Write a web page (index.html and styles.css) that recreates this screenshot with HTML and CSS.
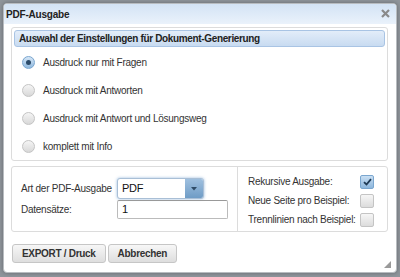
FILE: index.html
```html
<!DOCTYPE html>
<html lang="de">
<head>
	<meta charset="UTF-8">
	<title>PDF-Ausgabe</title>
	<link rel="stylesheet" href="styles.css">
</head>
<body>
	<div class="dialog">
		<div class="titlebar">
			<span class="title">PDF-Ausgabe</span>
			<span class="close">
				<svg width="9" height="9" viewBox="0 0 9 9"><path d="M1 1 L8 8 M8 1 L1 8" stroke="#8a8a8a" stroke-width="2.2"/></svg>
			</span>
		</div>
		<div class="body">
			<div class="box">
				<div class="legend">Auswahl der Einstellungen für Dokument-Generierung</div>
				<label class="radio-row"><span class="radio checked"></span>Ausdruck nur mit Fragen</label>
				<label class="radio-row"><span class="radio"></span>Ausdruck mit Antworten</label>
				<label class="radio-row"><span class="radio"></span>Ausdruck mit Antwort und Lösungsweg</label>
				<label class="radio-row"><span class="radio"></span>komplett mit Info</label>
			</div>

			<div class="box options">
				<div class="opt-left">
					<div class="form-row">
						<span class="lbl">Art der PDF-Ausgabe</span>
						<div class="select">
							<span class="select-val">PDF</span>
							<span class="select-btn">
								<svg width="6" height="4" viewBox="0 0 6 4"><path d="M0 0 L6 0 L3 3.5 Z" fill="#2f4b66"/></svg>
							</span>
						</div>
					</div>
					<div class="form-row">
						<span class="lbl">Datensätze:</span>
						<div class="input">1</div>
					</div>
				</div>
				<div class="opt-right">
					<div class="check-row"><span>Rekursive Ausgabe:</span><span class="check checked">
						<svg width="9" height="8" viewBox="0 0 9 8"><path d="M1 4.2 L3.5 6.5 L8 1.2" stroke="#1f3a55" stroke-width="1.8" fill="none"/></svg>
					</span></div>
					<div class="check-row"><span>Neue Seite pro Beispiel:</span><span class="check"></span></div>
					<div class="check-row"><span>Trennlinien nach Beispiel:</span><span class="check"></span></div>
				</div>
			</div>

			<div class="buttons">
				<button class="btn">EXPORT / Druck</button>
				<button class="btn">Abbrechen</button>
			</div>
			<span class="grip">
				<svg width="7" height="7" viewBox="0 0 7 7"><path d="M7 0 L7 7 L0 7 Z" fill="#9a9a9a"/></svg>
			</span>
		</div>
	</div>
</body>
</html>
```

FILE: styles.css
```css
*{
	margin: 0;
	padding: 0;
	box-sizing: border-box;
}
body{
	width: 400px;
	height: 277px;
	overflow: hidden;
	background: #8f959b;
	font-family: "Liberation Sans", Arial, sans-serif;
	font-size: 10px;
	letter-spacing: -0.25px;
	color: #333;
}
.dialog{
	position: relative;
	margin: 3px 3px 0 3px;
	width: 394px;
	height: 270px;
	background: #fff;
	border: 1px solid #b8bcc0;
	border-radius: 4px;
	box-shadow: 0 0 4px rgba(0,0,0,0.3);
}
.titlebar{
	height: 20px;
	display: flex;
	justify-content: space-between;
	align-items: center;
	padding: 0 6px 0 2px;
	background: linear-gradient(#d3e3f5, #eaf2fb);
	border-radius: 3px 3px 0 0;
}
.title{
	font-weight: bold;
	font-size: 10px;
	letter-spacing: -0.2px;
	color: #222;
}
.close{
	display: flex;
	margin-top: -2px;
}
.body{
	padding: 3px 7px 0 7px;
}
.box{
	border: 1px solid #dcdcdc;
	border-radius: 3px;
	width: 377px;
}
.legend{
	margin: 2px 2px 1px 2px;
	height: 17px;
	line-height: 15px;
	padding-left: 4px;
	font-weight: bold;
	font-size: 10px;
	letter-spacing: -0.35px;
	color: #222;
	background: linear-gradient(#e3edf9, #c8dbf1);
	border: 1px solid #a9c4e4;
	border-radius: 3px;
}
.radio-row{
	display: flex;
	align-items: center;
	height: 28px;
	padding-left: 10px;
	color: #333;
}
.radio{
	width: 13px;
	height: 13px;
	border-radius: 50%;
	margin-right: 8px;
	border: 1px solid #c4c4c4;
	background: linear-gradient(#f5f5f5, #d8d8d8);
	position: relative;
}
.radio.checked{
	border-color: #7aa6cf;
	background: linear-gradient(#d6e7f7, #8fb8de);
}
.radio.checked::after{
	content: "";
	position: absolute;
	left: 3px;
	top: 3px;
	width: 5px;
	height: 5px;
	border-radius: 50%;
	background: #2b4a68;
}
.options{
	margin-top: 5px;
	height: 66px;
	display: flex;
}
.opt-left{
	width: 226px;
	border-right: 1px solid #dcdcdc;
	padding: 11px 0 0 9px;
}
.form-row{
	display: flex;
	align-items: center;
	height: 21px;
}
.lbl{
	width: 96px;
}
.select{
	width: 87px;
	height: 21px;
	display: flex;
	border: 1px solid #a9bfd6;
	border-radius: 3px;
	box-shadow: 0 0 3px rgba(80,140,200,0.6);
	background: #fff;
}
.select-val{
	flex: 1;
	line-height: 19px;
	padding-left: 4px;
	font-size: 11px;
	color: #111;
}
.select-btn{
	width: 18px;
	display: flex;
	align-items: center;
	justify-content: center;
	background: linear-gradient(#9fc0df, #6f9cc6);
	border-radius: 0 2px 2px 0;
}
.input{
	width: 111px;
	height: 19px;
	line-height: 17px;
	padding-left: 4px;
	font-size: 11px;
	border: 1px solid #bbb;
	border-top-color: #999;
	border-radius: 2px;
	color: #111;
}
.opt-right{
	flex: 1;
	padding: 5px 0 0 10px;
}
.check-row{
	display: flex;
	justify-content: space-between;
	align-items: center;
	height: 19px;
	padding-right: 13px;
	white-space: nowrap;
}
.check{
	width: 14px;
	height: 14px;
	border: 1px solid #c4c4c4;
	border-radius: 2px;
	background: linear-gradient(#f6f6f6, #dcdcdc);
	display: flex;
	align-items: center;
	justify-content: center;
}
.check.checked{
	border-color: #7aa6cf;
	background: linear-gradient(#c9dff3, #8db6dc);
}
.buttons{
	display: flex;
	gap: 2px;
	margin-top: 12px;
	padding-left: 1px;
}
.btn{
	height: 19px;
	padding: 0 9px;
	font-family: "Liberation Sans", Arial, sans-serif;
	font-size: 10px;
	letter-spacing: -0.3px;
	font-weight: bold;
	color: #333;
	border: 1px solid #c6c6c6;
	border-radius: 3px;
	background: linear-gradient(#f7f7f7, #dedede);
}
.grip{
	position: absolute;
	right: 5px;
	bottom: 4px;
	display: flex;
}
```
